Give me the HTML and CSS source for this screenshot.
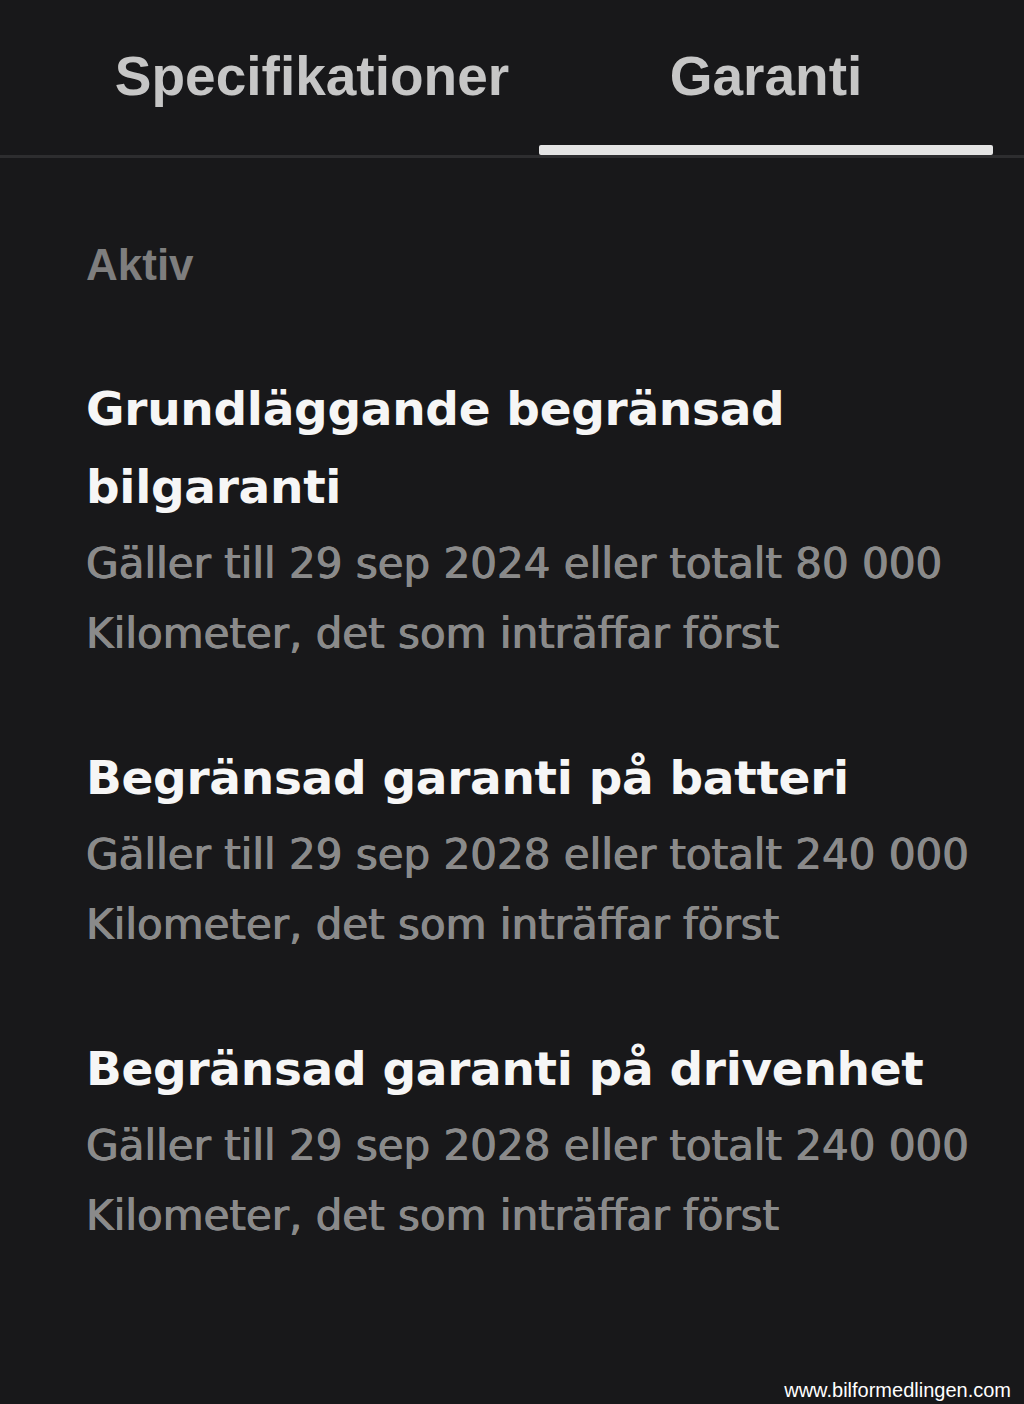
FILE: index.html
```html
<!DOCTYPE html>
<html lang="sv">
<head>
<meta charset="utf-8">
<title>Garanti</title>
<link rel="stylesheet" href="styles.css">
</head>
<body>
<div class="screen">
  <nav class="tabs">
    <div class="tab">Specifikationer</div>
    <div class="tab active">Garanti</div>
  </nav>
  <main class="content">
    <div class="section-label">Aktiv</div>
    <section class="item">
      <h2 class="item-title">Grundläggande begränsad bilgaranti</h2>
      <p class="item-sub">Gäller till 29 sep 2024 eller totalt 80 000 Kilometer, det som inträffar först</p>
    </section>
    <section class="item">
      <h2 class="item-title">Begränsad garanti på batteri</h2>
      <p class="item-sub">Gäller till 29 sep 2028 eller totalt 240 000 Kilometer, det som inträffar först</p>
    </section>
    <section class="item">
      <h2 class="item-title">Begränsad garanti på drivenhet</h2>
      <p class="item-sub">Gäller till 29 sep 2028 eller totalt 240 000 Kilometer, det som inträffar först</p>
    </section>
  </main>
  <div class="watermark">www.bilformedlingen.com</div>
</div>
</body>
</html>
```

FILE: styles.css
```css
html, body {
  margin: 0;
  padding: 0;
  background: #18181a;
}

.screen {
  position: relative;
  width: 1024px;
  height: 1404px;
  background: #18181a;
  overflow: hidden;
}

.tabs {
  display: flex;
  padding: 0 31px 0 85px;
  border-bottom: 3px solid #2d2d2f;
}

.tab {
  position: relative;
  flex: 1;
  height: 155px;
  box-sizing: border-box;
  padding-top: 44px;
  text-align: center;
  font-family: "Liberation Sans", Arial, sans-serif;
  font-weight: bold;
  font-size: 55px;
  line-height: 64px;
  color: #c6c6c6;
}

.tab.active::after {
  content: "";
  position: absolute;
  left: 0;
  right: 0;
  bottom: 0;
  height: 10px;
  border-radius: 2px;
  background: #e4e4e4;
}

.content {
  padding: 0 18px 0 86px;
}

.section-label {
  margin-top: 82px;
  font-family: "Liberation Sans", Arial, sans-serif;
  font-weight: bold;
  font-size: 44px;
  line-height: 50px;
  color: #7e7e7e;
}

.item {
  margin-top: 80px;
}

.item + .item {
  margin-top: 70px;
}

.item-title {
  margin: 0;
  font-family: "DejaVu Sans", sans-serif;
  font-weight: bold;
  font-size: 47px;
  line-height: 78px;
  letter-spacing: -0.3px;
  color: #f6f6f6;
}

.item-sub {
  margin: 3px 0 0;
  font-family: "DejaVu Sans", sans-serif;
  font-weight: normal;
  font-size: 42px;
  line-height: 70px;
  color: #8a8a8a;
  text-shadow: 0.7px 0 0 #8a8a8a, -0.4px 0 0 #8a8a8a;
}

.watermark {
  position: absolute;
  right: 13px;
  bottom: 2px;
  font-family: "Liberation Sans", Arial, sans-serif;
  font-size: 20px;
  line-height: 24px;
  color: #ffffff;
}
```
